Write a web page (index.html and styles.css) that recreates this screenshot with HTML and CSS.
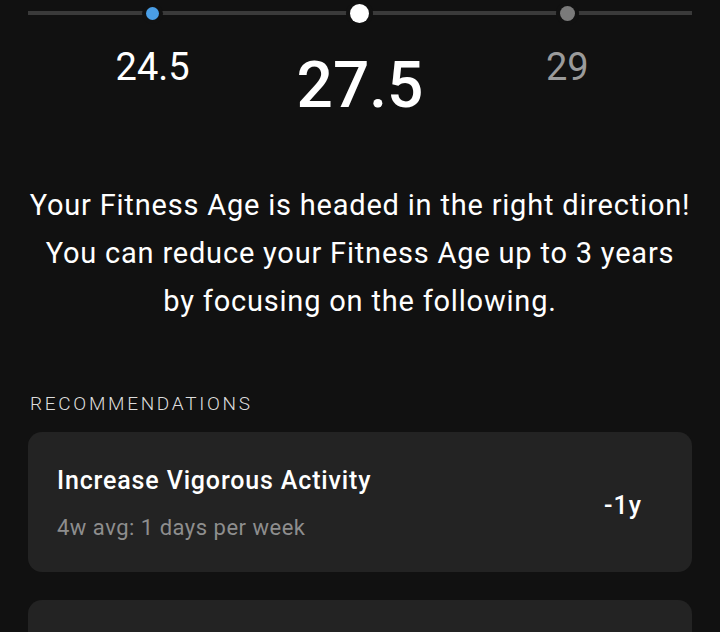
FILE: index.html
```html
<!DOCTYPE html>
<html lang="en">
<head>
    <meta charset="UTF-8">
    <meta name="viewport" content="width=device-width, initial-scale=1.0">
    <title>Fitness Age</title>
    <link rel="stylesheet" href="styles.css">
</head>
<body>

    <!-- Age scale -->
    <div class="scale">
        <div class="scale-track">
            <span class="dot dot-past"></span>
            <span class="dot dot-now"></span>
            <span class="dot dot-real"></span>
        </div>
        <div class="scale-labels">
            <span class="label">24.5</span>
            <span class="label label-now">27.5</span>
            <span class="label label-real">29</span>
        </div>
    </div>

    <p class="summary">
        Your Fitness Age is headed in the right direction!<br>
        You can reduce your Fitness Age up to 3 years<br>
        by focusing on the following.
    </p>

    <!-- Recommendations -->
    <div class="section">
        <h2 class="section-title">RECOMMENDATIONS</h2>

        <div class="card">
            <div class="card-text">
                <div class="card-title">Increase Vigorous Activity</div>
                <div class="card-sub">4w avg: 1 days per week</div>
            </div>
            <div class="card-value">-1y</div>
        </div>

        <div class="card">
            <div class="card-text">
                <div class="card-title">Lower Resting Heart Rate</div>
                <div class="card-sub">7d avg: 62 bpm</div>
            </div>
            <div class="card-value">-1y</div>
        </div>
    </div>

</body>
</html>
```

FILE: styles.css
```css
body {
    font-family: 'Roboto', 'Liberation Sans', sans-serif;
    margin: 0;
    background: #111111;
    color: #ffffff;
    overflow: hidden;
}
.scale {
    padding: 0 28px;
}
.scale-track {
    display: grid;
    grid-template-columns: repeat(3, 1fr);
    align-items: center;
    justify-items: center;
    height: 26px;
    padding: 0 21px;
    background: linear-gradient(#3a3a3a, #3a3a3a) no-repeat 0 11px / 100% 4px;
}
.dot {
    display: block;
    width: 13px;
    height: 13px;
    border-radius: 50%;
    box-shadow: 0 0 0 4px #111111;
}
.dot-past {
    background: #4a9ee6;
}
.dot-now {
    width: 19px;
    height: 19px;
    background: #ffffff;
}
.dot-real {
    width: 15px;
    height: 15px;
    background: #7a7a7a;
}
.scale-labels {
    display: grid;
    grid-template-columns: repeat(3, 1fr);
    align-items: start;
    justify-items: center;
    padding: 22px 21px 0;
}
.label {
    font-size: 38px;
    line-height: 1;
}
.label-now {
    margin-top: 6px;
    font-size: 64px;
    font-weight: 500;
}
.label-real {
    color: #9b9b9b;
}
.summary {
    margin: 63px 0 0;
    font-size: 29px;
    line-height: 48px;
    letter-spacing: 0.8px;
    text-align: center;
}
.section {
    padding: 68px 28px 0;
}
.section-title {
    margin: 0 0 16px 2px;
    font-size: 19px;
    font-weight: 300;
    line-height: 1.2;
    letter-spacing: 2.7px;
    color: #dddddd;
}
.card {
    display: flex;
    align-items: center;
    justify-content: space-between;
    padding: 34px 50px 31px 29px;
    margin-bottom: 28px;
    background: #232323;
    border-radius: 14px;
}
.card-title {
    font-size: 25px;
    font-weight: 500;
    line-height: 1.2;
    letter-spacing: 0.85px;
}
.card-sub {
    margin-top: 19px;
    font-size: 22px;
    line-height: 1.2;
    letter-spacing: 0.5px;
    color: #8e8e8e;
}
.card-value {
    margin-top: 4px;
    font-size: 25px;
    font-weight: 500;
    letter-spacing: 1px;
}
```
